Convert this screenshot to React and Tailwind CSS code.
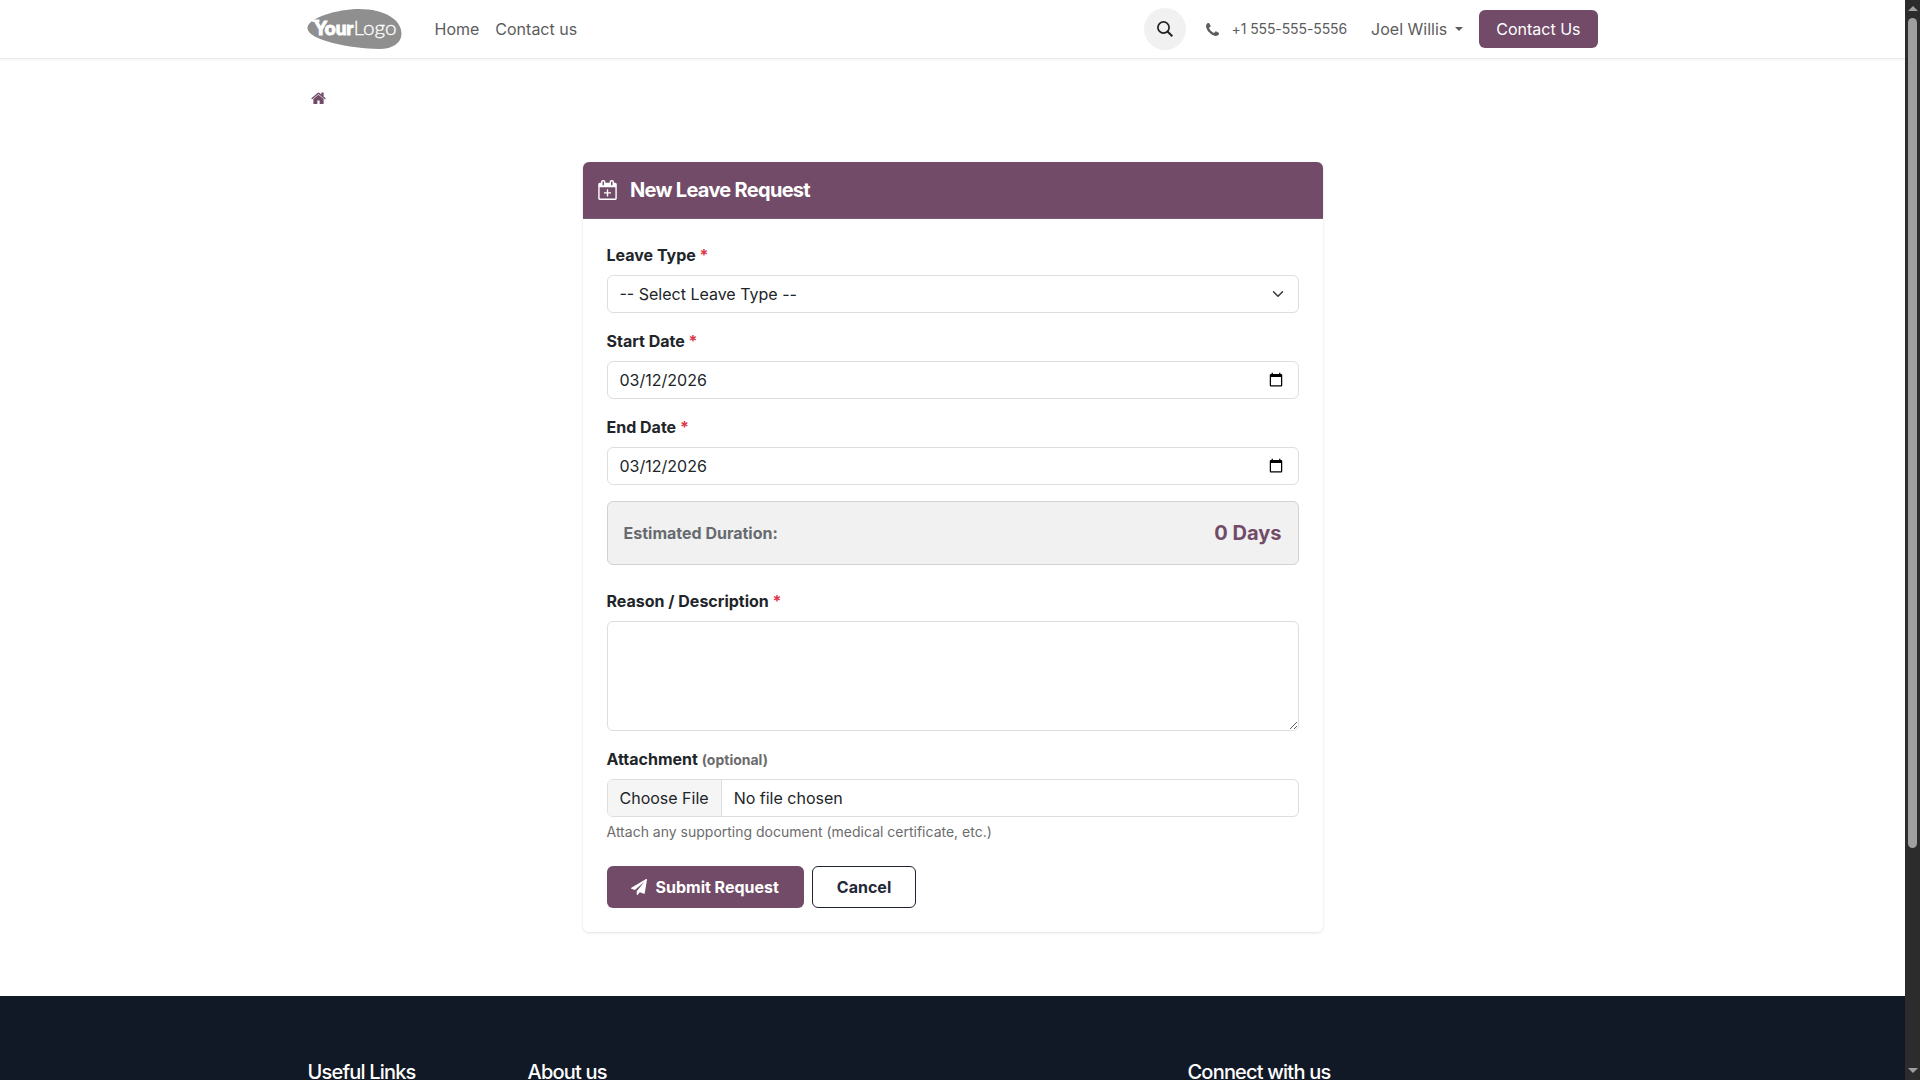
import React, { useState } from "react";

function HomeIcon() {
  return (
    <svg viewBox="64 192 1664 1344" className="h-[12px] w-[15px] fill-[#714b67]">
      <path d="M1472 992v480q0 26-19 45t-45 19h-384v-384h-256v384h-384q-26 0-45-19t-19-45v-480q0-1 .5-3t.5-3l575-474 575 474q1 2 1 6zm223-69l-62 74q-8 9-21 11h-3q-13 0-21-7l-692-577-692 577q-12 8-24 7-13-2-21-11l-62-74q-8-10-7-23.5t11-21.5l719-599q32-26 76-26t76 26l244 204v-195q0-14 9-23t23-9h192q14 0 23 9t9 23v408l219 182q10 8 11 21.5t-7 23.5z" />
    </svg>
  );
}

function PhoneIcon() {
  return (
    <svg viewBox="192 128 1408 1408" className="h-[13px] w-[13px] fill-[#5c5c5c]">
      <path d="M1600 1240q0 27-10 70.5t-21 68.5q-21 50-122 106-94 51-186 51-27 0-53-3.5t-57.5-12.5-47-14.5-55.5-20.5-49-18q-98-35-175-83-127-79-264-216t-216-264q-48-77-83-175-3-9-18-49t-20.5-55.5-14.5-47-12.5-57.5-3.5-53q0-92 51-186 56-101 106-122 25-11 68.5-21t70.5-10q14 0 21 3 18 6 53 76 11 19 30 54t35 63.5 31 53.5q3 4 17.5 25t21.5 35.5 7 28.5q0 20-28.5 50t-62 55-62 53-28.5 46q0 9 5 22.5t8.5 20.5 14 24 11.5 19q76 137 174 235t235 174q2 1 19 11.5t24 14 20.5 8.5 22.5 5q18 0 46-28.5t53-62 55-62 50-28.5q14 0 28.5 7t35.5 21.5 25 17.5q25 15 53.5 31t63.5 35 54 30q70 35 76 53 3 7 3 21z" />
    </svg>
  );
}

function CalendarPlusIcon() {
  return (
    <svg viewBox="128 -128 1664 1792" className="h-5 w-[19px] fill-white">
      <path d="M1664 128q52 0 90 38t38 90v1280q0 52-38 90t-90 38h-1408q-52 0-90-38t-38-90v-1280q0-52 38-90t90-38h128v-96q0-66 47-113t113-47h64q66 0 113 47t47 113v96h384v-96q0-66 47-113t113-47h64q66 0 113 47t47 113v96h128zm-384-96v288q0 14 9 23t23 9h64q14 0 23-9t9-23v-288q0-14-9-23t-23-9h-64q-14 0-23 9t-9 23zm-768 0v288q0 14 9 23t23 9h64q14 0 23-9t9-23v-288q0-14-9-23t-23-9h-64q-14 0-23 9t-9 23zm1152 1504v-1024h-1408v1024h1408zm-640-576h224q14 0 23 9t9 23v64q0 14-9 23t-23 9h-224v224q0 14-9 23t-23 9h-64q-14 0-23-9t-9-23v-224h-224q-14 0-23-9t-9-23v-64q0-14 9-23t23-9h224v-224q0-14 9-23t23-9h64q14 0 23 9t9 23v224z" />
    </svg>
  );
}

function PaperPlaneIcon() {
  return (
    <svg viewBox="0 0 1792 1792" className="h-4 w-4 fill-white">
      <path d="M1764 11q33 24 27 64l-256 1536q-5 29-32 45-14 8-31 8-11 0-24-5l-453-185-242 295q-18 23-49 23-13 0-22-4-19-7-30.5-23.5t-11.5-36.5v-349l864-1059-1069 925-395-162q-37-14-40-55-2-40 32-59l1664-960q15-9 32-9 20 0 36 11z" />
    </svg>
  );
}

function Logo() {
  return (
    <svg viewBox="0 0 95 40" className="-ml-px h-10 w-[95px]">
      <path
        d="M0.5 18.5C1.5 9 30 0 52 0C78 0 94.500 11 94.500 24.500C94.500 34 86 40 72 40C44 40 -1 31 0.500 18.500Z"
        fill="#8f8f8f"
      />
      <path d="M4.500 10.500h8v2.500h-7z" fill="#fff" />
      <text
        x="7.500"
        y="25.500"
        fontSize="19.500"
        fontWeight="900"
        fill="#fff"
        stroke="#fff"
        strokeWidth="1"
        textLength="39"
        lengthAdjust="spacingAndGlyphs"
        className="font-[Lato,sans-serif]"
      >
        Your
      </text>
      <text
        x="46.500"
        y="25.500"
        fontSize="20.500"
        fontWeight="300"
        fill="#fff"
        stroke="#fff"
        strokeWidth="0.300"
        textLength="43"
        lengthAdjust="spacingAndGlyphs"
        className="font-[Lato,sans-serif]"
      >
        Logo
      </text>
    </svg>
  );
}

function Navbar() {
  return (
    <header className="h-[59px] shrink-0 border-b border-[#ebebeb] shadow-[0_1px_2px_rgba(0,0,0,0.05)]">
      <div className="mx-auto flex h-[58px] w-[1320px] items-center px-[15px] text-[#5c5c5c]">
        <Logo />
        <nav className="ml-[33px] flex gap-4">
          <a href="#">Home</a>
          <a href="#">Contact us</a>
        </nav>
        <div className="ml-auto flex items-center">
          <button className="flex h-[42px] w-[42px] items-center justify-center rounded-full bg-[#f1f1f1]">
            <svg viewBox="0 0 16 16" className="h-4 w-4" fill="none" stroke="#212529" strokeWidth="1.7">
              <circle cx="6.500" cy="6.500" r="5.600" />
              <path d="M10.500 10.500L15.300 15.300" strokeWidth="2" />
            </svg>
          </button>
          <a href="#" className="ml-5 flex items-center text-sm">
            <PhoneIcon />
            <span className="ml-[13px] tracking-[-0.1px]">+1 555-555-5556</span>
          </a>
          <a href="#" className="ml-6 flex items-center">
            Joel Willis
            <span className="ml-2 border-x-4 border-t-4 border-x-transparent border-t-[#5c5c5c]"></span>
          </a>
          <a href="#" className="ml-4 flex h-[38px] items-center rounded-md bg-[#714b67] px-[17px] text-white">
            Contact Us
          </a>
        </div>
      </div>
    </header>
  );
}

function Label({ children, required }) {
  return (
    <label className="mb-2 block font-bold">
      {children}
      {required && <span className="text-[#dc3545]"> *</span>}
    </label>
  );
}

function DateField({ label, value, onChange }) {
  return (
    <div className="mb-4">
      <Label required>{label}</Label>
      <input
        type="date"
        value={value}
        onChange={(e) => onChange(e.target.value)}
        className="block h-[38px] w-full rounded-md border border-[#dedede] px-3 py-1.5 [&::-webkit-datetime-edit-day-field]:p-0 [&::-webkit-datetime-edit-month-field]:p-0 [&::-webkit-datetime-edit-year-field]:p-0"
      />
    </div>
  );
}

function LeaveForm() {
  const [start, setStart] = useState("2026-03-12");
  const [end, setEnd] = useState("2026-03-12");

  return (
    <section className="mx-auto w-[740px] rounded-md shadow-[0_1px_3px_rgba(0,0,0,0.12)]">
      <div className="flex h-[57px] items-center rounded-t-md border-b border-[#7f5c76] bg-[#714b67] px-[15px]">
        <CalendarPlusIcon />
        <h5 className="ml-[13.5px] text-xl font-bold tracking-[-0.7px] text-white">New Leave Request</h5>
      </div>
      <form className="p-6">
        <div className="mb-4">
          <Label required>Leave Type</Label>
          <div className="grid items-center">
            <select className="col-start-1 row-start-1 h-[38px] w-full appearance-none rounded-md border border-[#dedede] px-3 py-1.5">
              <option>-- Select Leave Type --</option>
            </select>
            <svg
              viewBox="0 0 16 16"
              className="pointer-events-none col-start-1 row-start-1 mr-[13px] h-3 w-4 justify-self-end"
              fill="none"
              stroke="#343a40"
              strokeWidth="2"
              strokeLinecap="round"
              strokeLinejoin="round"
            >
              <path d="m2 5 6 6 6-6" />
            </svg>
          </div>
        </div>
        <DateField label="Start Date" value={start} onChange={setStart} />
        <DateField label="End Date" value={end} onChange={setEnd} />

        <div className="mb-6 flex h-16 items-center justify-between rounded-md border border-[#d2d2d2] bg-[#f1f1f1] px-4">
          <span className="font-bold text-[#666b70]">Estimated Duration:</span>
          <span className="text-xl font-bold text-[#714b67]">0 Days</span>
        </div>

        <div className="mb-4">
          <Label required>Reason / Description</Label>
          <textarea
            rows="4"
            className="block h-[110px] w-full resize-y rounded-md border border-[#dedede] px-3 py-1.5"
          ></textarea>
        </div>

        <div className="mb-6">
          <Label>
            Attachment <span className="text-sm text-[#6c6c6c]">(optional)</span>
          </Label>
          <input
            type="file"
            className="block h-[38px] w-full rounded-md border border-[#dedede] file:mr-3 file:h-9 file:border-r file:border-[#dedede] file:bg-[#f5f5f5] file:px-3"
          />
          <p className="mt-1 text-sm leading-[21px] text-[#6c6c6c]">
            Attach any supporting document (medical certificate, etc.)
          </p>
        </div>

        <div className="flex gap-2">
          <button
            type="button"
            className="flex h-[42px] items-center gap-[8.5px] rounded-md bg-[#714b67] pr-[25px] pl-[24.5px] font-bold text-white"
          >
            <PaperPlaneIcon />
            Submit Request
          </button>
          <button type="button" className="h-[42px] rounded-md border border-[#1f2433] px-6 font-bold text-[#1f2937]">
            Cancel
          </button>
        </div>
      </form>
    </section>
  );
}

function Footer() {
  return (
    <footer className="mt-16 flex-1 bg-[#121926] pt-16 text-white">
      <div className="mx-auto flex w-[1320px] px-[15px] text-xl font-medium leading-6 tracking-[-0.8px]">
        <h5 className="w-[220px]">Useful Links</h5>
        <h5 className="w-[660px]">About us</h5>
        <h5>Connect with us</h5>
      </div>
    </footer>
  );
}

function Scrollbar() {
  return (
    <div className="flex w-[15px] flex-col items-center bg-[#2c2c2c]">
      <span className="mt-1.5 border-x-[5px] border-b-[5px] border-x-transparent border-b-[#9f9f9f]"></span>
      <span className="mt-[7px] h-[830px] w-[9px] rounded-full bg-[#9f9f9f]"></span>
      <span className="mt-auto mb-[7px] border-x-[5px] border-t-[5px] border-x-transparent border-t-[#9f9f9f]"></span>
    </div>
  );
}

function App() {
  return (
    <div className="flex h-screen overflow-hidden bg-white font-[Inter,sans-serif] text-base text-[#212529]">
      <div className="flex flex-1 flex-col overflow-hidden">
        <Navbar />
        <div className="mx-auto flex h-[103px] w-[1320px] shrink-0 px-[18px] pt-[33px]">
          <HomeIcon />
        </div>
        <LeaveForm />
        <Footer />
      </div>
      <Scrollbar />
    </div>
  );
}

export default App;
